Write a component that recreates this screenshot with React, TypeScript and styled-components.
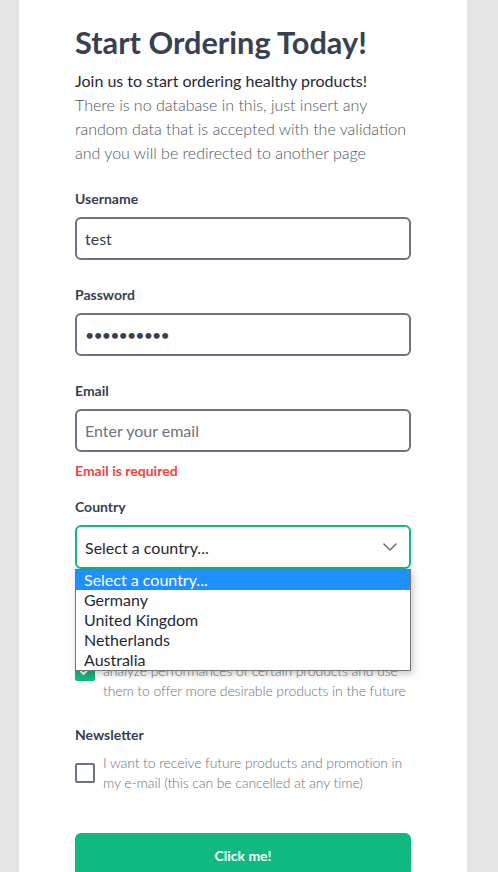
import React from "react";
import styled, { createGlobalStyle } from "styled-components";

const GlobalStyle = createGlobalStyle`
  html, body {
    margin: 0;
    padding: 0;
    background: #e5e5e5;
    font-family: Lato, "Open Sans", sans-serif;
  }
  * {
    box-sizing: border-box;
  }
`;

const Page = styled.div`
  display: flex;
  min-height: 100vh;
  padding-left: 19px;
`;

const Panel = styled.div`
  width: 448px;
  min-height: 100vh;
  background: #ffffff;
  padding: 25px 56px 40px;
  display: flex;
  flex-direction: column;
`;

const Title = styled.h1`
  margin: 0;
  font-size: 30.7px;
  line-height: 36px;
  font-weight: 700;
  color: #374151;
`;

const Intro = styled.p`
  margin: 8px 0 0;
  font-size: 16px;
  line-height: 24px;
  font-weight: 400;
  color: #1f2937;
`;

const Description = styled.p`
  margin: 0;
  font-size: 16px;
  line-height: 24px;
  font-weight: 300;
  color: #4b5563;
`;

const Field = styled.div<{ $gap?: number }>`
  display: flex;
  flex-direction: column;
  margin-top: ${(p) => p.$gap ?? 24}px;
`;

const Label = styled.label`
  display: block;
  font-size: 14px;
  line-height: 21px;
  font-weight: 700;
  color: #374151;
  margin-bottom: 8px;
`;

const TextInput = styled.input<{ $secret?: boolean }>`
  width: 100%;
  height: 43px;
  padding: 0 8px;
  border: 2px solid #6b7280;
  border-radius: 6px;
  font-family: Lato, "Open Sans", sans-serif;
  font-size: 16px;
  color: #374151;
  letter-spacing: ${(p) => (p.$secret ? "-0.9px" : "normal")};
  outline: none;
  &::placeholder {
    color: #6b7280;
  }
`;

const ErrorText = styled.div`
  margin-top: 8px;
  font-size: 14px;
  line-height: 21px;
  font-weight: 700;
  color: #ef4444;
`;

const SelectWrap = styled.div`
  position: relative;
`;

const SelectBox = styled.div`
  height: 44px;
  padding: 0 12px 0 8px;
  border: 2px solid #10b981;
  border-radius: 6px;
  display: flex;
  align-items: center;
  justify-content: space-between;
  font-size: 16px;
  color: #1f2937;
`;

const Options = styled.ul`
  position: absolute;
  top: 44px;
  left: 0;
  right: 0;
  margin: 0;
  padding: 0;
  list-style: none;
  background: #ffffff;
  border: 1px solid #767676;
  box-shadow: 2px 3px 7px rgba(0, 0, 0, 0.22);
  z-index: 10;
`;

const Option = styled.li<{ $active?: boolean }>`
  height: 20px;
  line-height: 20px;
  padding-left: 8px;
  font-size: 16px;
  background: ${(p) => (p.$active ? "#1e90ff" : "transparent")};
  color: ${(p) => (p.$active ? "#ffffff" : "#1f2937")};
`;

const CheckRow = styled.div`
  display: flex;
  align-items: center;
  gap: 8px;
`;

const Box = styled.span<{ $checked?: boolean }>`
  flex: 0 0 20px;
  width: 20px;
  height: 20px;
  border-radius: 2px;
  border: 2px solid ${(p) => (p.$checked ? "#10b981" : "#6b7280")};
  background: ${(p) => (p.$checked ? "#10b981" : "#ffffff")};
  display: flex;
  align-items: center;
  justify-content: center;
`;

const CheckText = styled.span`
  font-size: 14px;
  line-height: 20px;
  font-weight: 300;
  letter-spacing: -0.1px;
  color: #6b7280;
`;

const Button = styled.button`
  margin-top: 40px;
  width: 100%;
  height: 44px;
  border: none;
  border-radius: 6px;
  background: #10b981;
  color: #ffffff;
  font-family: Lato, "Open Sans", sans-serif;
  font-size: 14px;
  font-weight: 700;
`;

const countries = ["Select a country...", "Germany", "United Kingdom", "Netherlands", "Australia"];

export default function App() {
  return (
    <>
      <GlobalStyle />
      <Page>
        <Panel>
          <Title>Start Ordering Today!</Title>
          <Intro>Join us to start ordering healthy products!</Intro>
          <Description>
            There is no database in this, just insert any random data that is accepted with the
            validation and you will be redirected to another page
          </Description>

          <Field $gap={23}>
            <Label>Username</Label>
            <TextInput defaultValue="test" />
          </Field>

          <Field>
            <Label>Password</Label>
            <TextInput type="password" $secret defaultValue="password12" />
          </Field>

          <Field>
            <Label>Email</Label>
            <TextInput placeholder="Enter your email" />
            <ErrorText>Email is required</ErrorText>
          </Field>

          <Field $gap={15}>
            <Label>Country</Label>
            <SelectWrap>
              <SelectBox>
                <span>Select a country...</span>
                <svg width="14" height="8" viewBox="0 0 14 8" fill="none">
                  <path d="M1 1l6 6 6-6" stroke="#6b7280" strokeWidth="1.6" strokeLinecap="round" strokeLinejoin="round" />
                </svg>
              </SelectBox>
              <Options>
                {countries.map((c, i) => (
                  <Option key={c} $active={i === 0}>
                    {c}
                  </Option>
                ))}
              </Options>
            </SelectWrap>
          </Field>

          <Field $gap={43}>
            <Label>Data usage</Label>
            <CheckRow>
              <Box $checked>
                <svg width="12" height="12" viewBox="0 0 12 12" fill="none">
                  <path d="M2 6.5l2.5 2.5L10 3.5" stroke="#ffffff" strokeWidth="2" strokeLinecap="round" strokeLinejoin="round" />
                </svg>
              </Box>
              <CheckText>
                I agree that my data may be collected in order to analyze performances of certain
                products and use them to offer more desirable products in the future
              </CheckText>
            </CheckRow>
          </Field>

          <Field $gap={23}>
            <Label>Newsletter</Label>
            <CheckRow>
              <Box />
              <CheckText>
                I want to receive future products and promotion in my e-mail (this can be cancelled
                at any time)
              </CheckText>
            </CheckRow>
          </Field>

          <Button>Click me!</Button>
        </Panel>
      </Page>
    </>
  );
}
